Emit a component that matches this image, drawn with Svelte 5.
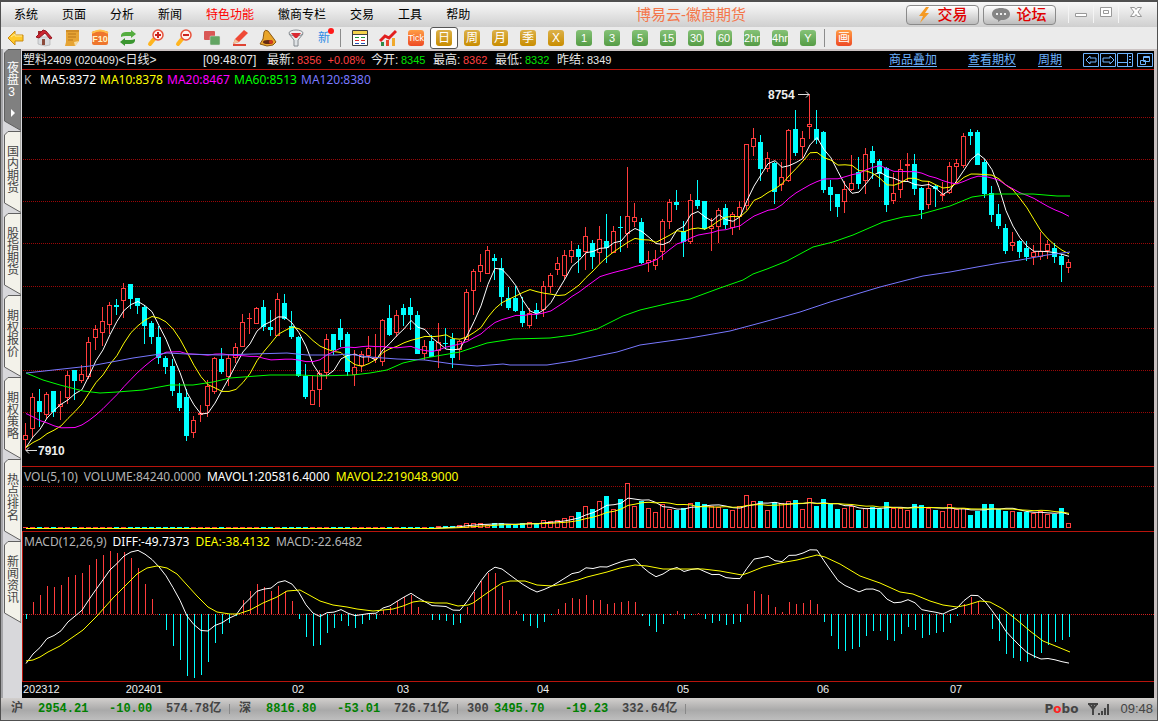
<script lang="ts">
	type Candle = { up: boolean; high: number; top: number; bottom: number; low: number };

	const STEP = 7;
	const FIRST_X = 25;
	const PRICE_TOP = 88;
	const VOL_TOP = 483;
	const VOL_BASE = 528;
	const MACD_TOP = 547;
	const ZERO = 614;

	const menus = ['系统', '页面', '分析', '新闻', '特色功能', '徽商专栏', '交易', '工具', '帮助'];
	const tabs = ['夜盘3', '国内期货', '股指期货', '期权报价', '期权策略', '热点排名', '新闻资讯'];
	const periods = [
		['日', 'gold'], ['周', 'gold'], ['月', 'gold'], ['季', 'gold'], ['X', 'gold'],
		['1', 'green'], ['3', 'green'], ['5', 'green'], ['15', 'green'], ['30', 'green'],
		['60', 'green'], ['2hr', 'green'], ['4hr', 'green'], ['Y', 'green']
	];
	const tools = ['back', 'home', 'note', 'f10', 'refresh', 'zoomin', 'zoomout', 'layers', 'pen', 'bell', 'filter', 'new'];
	const quotes = [
		['今开', '8345', 'down'],
		['最高', '8362', 'up'],
		['最低', '8332', 'down'],
		['昨结', '8349', '']
	];
	const indices = [
		['沪', '2954.21', '-10.00', '574.78亿'],
		['深', '8816.80', '-53.01', '726.71亿'],
		['300', '3495.70', '-19.23', '332.64亿']
	];
	const months: [number, string][] = [
		[17, '202401'], [39, '02'], [54, '03'], [74, '04'], [94, '05'], [114, '06'], [133, '07']
	];

	// direction, high, body top, body bottom, low
	const candles: Candle[] = `
r 423 435 440 450,r 393 397 429 437,c 389 401 412 427,r 392 394 415 419,c 391 391 412 417,
r 391 404 407 420,r 371 375 398 404,c 370 370 381 400,r 365 374 381 383,r 337 342 377 379,
r 325 329 338 350,r 307 321 333 346,r 302 305 325 334,c 299 305 307 315,r 283 288 301 318,
c 284 284 299 309,c 298 298 306 314,c 305 307 326 344,c 321 323 337 344,c 326 337 358 364,
c 356 358 367 374,c 359 366 391 396,c 383 393 408 411,c 389 397 436 441,r 416 420 433 438,
r 405 413 415 422,r 380 386 406 417,r 357 358 392 394,c 348 359 372 374,r 355 358 377 386,
r 343 347 358 363,r 314 322 347 347,r 313 318 319 334,r 307 308 324 324,c 300 307 327 331,
c 310 327 330 336,r 293 299 336 336,c 294 303 319 320,c 311 326 337 339,c 336 337 376 377,
c 364 376 397 399,r 376 390 405 405,r 370 373 390 407,r 334 339 373 379,c 334 334 350 355,
c 319 328 340 347,c 332 334 372 376,r 350 367 375 386,r 351 354 366 372,r 336 348 356 362,
r 334 357 359 363,r 319 320 362 366,c 305 318 335 336,r 310 315 333 337,c 304 308 315 326,
c 298 307 315 330,c 311 315 354 354,r 340 346 354 360,c 335 341 357 357,r 323 342 351 368,
c 328 343 344 349,c 333 339 358 368,r 340 341 350 360,r 289 292 340 340,r 269 271 291 315,
r 254 265 272 282,r 246 250 274 274,c 254 258 261 280,c 258 268 297 306,c 287 298 308 310,
c 286 298 311 312,c 297 311 323 327,r 308 313 326 328,c 303 310 313 319,r 281 286 310 317,
r 273 275 287 293,r 257 263 270 275,r 250 255 276 279,r 241 250 257 263,c 245 249 257 273,
r 227 236 252 270,c 240 243 257 269,r 226 239 253 264,c 214 241 248 263,r 226 231 253 253,
c 216 227 228 252,r 167 216 234 248,r 203 217 222 227,c 218 222 263 264,r 251 260 263 272,
r 250 259 266 270,r 219 221 252 260,r 199 202 222 229,c 190 202 205 210,c 221 231 242 257,
r 194 200 242 244,c 180 200 206 209,c 201 201 229 230,r 218 226 229 251,r 208 210 227 243,
c 204 208 225 229,r 212 214 228 235,r 201 207 217 230,r 144 144 206 210,r 128 138 147 156,
c 135 142 169 181,r 152 158 169 172,c 162 163 192 204,r 162 177 185 191,r 129 130 181 182,
c 110 129 153 156,r 131 138 147 158,r 94 124 127 139,c 110 129 140 144,c 131 132 190 193,
c 180 187 195 211,c 194 194 207 217,r 181 189 202 213,r 155 183 190 191,c 157 172 184 189,
r 148 154 181 194,c 146 151 163 179,c 159 161 174 187,c 167 168 205 212,r 173 193 201 204,
r 160 169 190 198,r 153 164 166 182,c 154 164 189 195,c 187 188 210 219,r 181 188 205 209,
c 185 186 189 207,r 182 194 196 201,r 162 166 193 194,r 159 163 167 183,r 133 136 166 168,
c 129 132 136 145,c 130 132 165 165,c 159 162 194 198,c 186 193 215 222,c 204 214 226 229,
c 224 228 251 254,r 232 242 246 251,c 240 241 252 258,c 241 248 257 261,r 245 252 257 265,
r 232 251 257 260,r 240 244 251 259,c 243 248 257 263,c 254 256 265 282,r 259 262 268 273`
		.split(',')
		.map((row) => {
			const [dir, ...v] = row.trim().split(' ');
			const [high, top, bottom, low] = v.map(Number);
			return { up: dir === 'r', high, top, bottom, low };
		});

	// Volume is negligible before the contract becomes active.
	const volume = [
		...Array(59).fill(VOL_BASE),
		526, 526, 526, 525, 523, 523, 523, 525, 523, 523, 524, 524, 523, 522, 523, 520, 521, 520, 518,
		516, 512, 506, 509, 501, 496, 509, 499, 483, 506, 501, 508, 512, 504, 509, 510, 508, 503, 502,
		504, 506, 507, 509, 510, 506, 495, 501, 501, 510, 502, 503, 501, 500, 509, 498, 506, 499, 504,
		509, 508, 506, 510, 508, 507, 509, 502, 508, 508, 510, 504, 505, 508, 510, 511, 504, 509, 508,
		515, 511, 504, 504, 509, 511, 511, 512, 512, 513, 511, 514, 514, 508, 523
	];

	const macd = [
		619, 602, 595, 586, 587, 585, 577, 575, 573, 565, 559, 555, 551, 553, 552, 558, 568, 584, 599,
		615, 630, 646, 660, 676, 678, 675, 662, 643, 634, 623, 616, 600, 591, 584, 587, 591, 586, 591,
		601, 619, 637, 646, 645, 633, 628, 621, 626, 628, 624, 620, 619, 610, 607, 601, 597, 595, 607,
		614, 620, 620, 621, 625, 623, 607, 592, 581, 573, 573, 586, 600, 611, 621, 626, 628, 622, 615,
		609, 603, 598, 599, 595, 600, 600, 604, 603, 602, 601, 602, 616, 626, 632, 624, 615, 611, 619,
		615, 613, 619, 623, 621, 625, 624, 622, 604, 591, 594, 595, 607, 612, 602, 604, 603, 600, 604,
		622, 636, 649, 651, 649, 647, 636, 631, 631, 640, 641, 634, 627, 630, 638, 635, 633, 632, 623,
		616, 604, 597, 602, 614, 629, 641, 654, 658, 661, 662, 658, 653, 645, 642, 640, 637
	];

	const dea: [number, number][] = [
		[26, 661], [33, 660], [40, 657], [48, 652], [60, 646], [83, 630], [97, 616], [113, 598],
		[127, 584], [137, 574], [147, 568], [157, 566], [167, 568], [177, 574], [187, 585], [197, 596],
		[208, 607], [217, 612], [230, 614], [238, 614], [250, 610], [263, 603], [277, 597], [287, 591],
		[300, 590], [320, 601], [333, 605], [347, 607], [357, 609], [373, 611], [393, 609], [403, 606],
		[413, 602], [420, 601], [435, 603], [447, 603], [458, 606], [468, 605], [473, 603], [487, 593],
		[502, 583], [510, 581], [525, 581], [537, 585], [552, 586], [563, 584], [578, 580], [587, 577],
		[607, 572], [620, 568], [635, 565], [647, 566], [663, 569], [703, 569], [720, 571], [742, 575],
		[748, 573], [763, 567], [780, 563], [797, 560], [817, 555], [825, 557], [840, 564], [860, 576],
		[880, 583], [900, 592], [913, 594], [930, 601], [943, 605], [957, 607], [967, 605], [980, 601],
		[990, 602], [1003, 609], [1017, 620], [1030, 631], [1043, 641], [1053, 645], [1070, 652]
	];

	const ma60 =
		'26,373 43,380 60,385 83,391 100,393 117,392 143,390 170,385 193,385 213,382 230,378 270,375 300,375 320,376 353,375 370,373 387,370 403,363 425,358 460,352 487,343 513,339 550,338 573,335 597,329 623,316 640,310 670,303 690,299 720,288 743,280 753,274 767,269 787,261 813,247 833,242 853,235 883,222 903,217 918,215 950,206 972,197 993,194 1033,194 1057,196 1070,196';
	const ma120 =
		'26,373 90,366 133,358 167,353 187,354 220,355 287,353 307,355 337,355 347,354 370,357 397,359 425,360 453,364 477,366 503,364 510,365 547,365 573,361 597,356 617,352 640,345 690,338 730,331 760,323 800,312 830,302 850,296 880,287 907,280 923,276 950,272 977,267 1000,263 1020,260 1047,255 1070,252';

	const x = (i: number) => FIRST_X + i * STEP;

	// closes before the first visible bar, so that the averages start at the left edge
	const earlier = [330, 338, 346, 355, 365, 376, 385, 425, 432, 438, 447, 447, 447, 447, 447, 450, 450, 450, 450];
	const closes = [...earlier, ...candles.map((c) => (c.up ? c.top : c.bottom))];

	function average(values: number[], n: number, lead: number) {
		const out: string[] = [];
		for (let i = lead; i < values.length; i++) {
			const part = values.slice(Math.max(0, i - n + 1), i + 1);
			const mean = part.reduce((a, b) => a + b, 0) / part.length;
			out.push(`${x(i - lead) + 1},${(mean + 0.5).toFixed(1)}`);
		}
		return out.join(' ');
	}

	function deaAt(px: number) {
		const k = Math.max(1, dea.findIndex((p) => p[0] >= px));
		const [x0, y0] = dea[k - 1];
		const [x1, y1] = dea[k];
		return y0 + ((y1 - y0) * (px - x0)) / (x1 - x0);
	}

	const diff = macd.map((v, i) => `${x(i) + 1},${(deaAt(x(i) + 1) + (v - ZERO) / 2).toFixed(1)}`).join(' ');

	let activePeriod = $state('日');
	let activeTab = $state('夜盘3');
</script>

<div class="window">
	<header class="titlebar">
		<nav class="menus">
			{#each menus as m}
				<button class="menu" class:hot={m === '特色功能'}>{m}</button>
			{/each}
		</nav>
		<h1>博易云-徽商期货</h1>
		<div class="actions">
			<button class="pill">
				<svg width="14" height="16" viewBox="0 0 14 16"><path d="M9 0 2 9h4l-3 7 9-10H8l4-6z" fill="#f59a23" /></svg>
				交易
			</button>
			<button class="pill">
				<svg width="18" height="14" viewBox="0 0 18 14">
					<path d="M9 0c5 0 9 2 9 6s-4 6-8 6l-1 0-3 2v-2C3 11 0 9 0 6c0-4 4-6 9-6z" fill="#858585" />
					<path d="M4 5h2v2H4zm4 0h2v2H8zm4 0h2v2h-2z" fill="#eee" />
				</svg>
				论坛
			</button>
			<div class="controls">
				<button aria-label="最小化"><svg width="14" height="14"><path d="M1.5 8.5h11v3h-11z" fill="#fff" stroke="#999" /></svg></button>
				<button aria-label="最大化"><svg width="14" height="14"><path d="M1.5 2.5h11v9h-11zM4.5 5.5h5v3h-5z" fill="#fff" stroke="#999" /></svg></button>
				<button aria-label="关闭"><svg width="14" height="14"><path d="M1.5 2.5h4l1.5 2 1.5-2h4L9 7l3.5 4.5h-4L7 9.5l-1.5 2h-4L5 7z" fill="#fff" stroke="#999" /></svg></button>
			</div>
		</div>
	</header>

	<div class="toolbar">
		{#each tools as t}
			<button class="tool" aria-label={t}>
				{#if t === 'new'}
					<span class="fresh">新</span>
				{:else}
					<svg width="18" height="18" viewBox="0 0 18 18">
						{#if t === 'back'}
							<path d="M1 9 8 2v4h8v6H8v4z" fill="#ffc928" stroke="#c98a12" />
							<path d="M4 8 8 5v2h7" fill="none" stroke="#ffeb9a" />
						{:else if t === 'home'}
							<path d="M3 8h12v8l-5 1-7-2z" fill="#d9dcdf" stroke="#9b9b9b" stroke-width=".5" />
							<path d="M3 2h3v4H3z" fill="#a52a2a" />
							<path d="M1 8 8 1l3 1 6 7-2 1-5-6-6 5z" fill="#cc2430" stroke="#931720" stroke-width="1" />
							<path d="M7 10h3v6H7z" fill="#8b4b3b" />
						{:else if t === 'note'}
							<path d="M3 1h13v11l-4 5H2l1-4z" fill="#e6a434" />
							<path d="m16 12-4 5-1-4z" fill="#f8dda0" />
							<path d="M3 2h13M5 5h8M5 8h8M5 11h5" stroke="#b9761a" />
						{:else if t === 'f10'}
							<rect x="1" y="2" width="16" height="14" rx="2" fill="#ef762d" />
							<path d="M1 4q8-5 16 0" fill="none" stroke="#ffc04a" stroke-width="2" />
							<text x="9" y="13" text-anchor="middle" font-size="9" font-weight="bold" fill="#fff3c8">F10</text>
						{:else if t === 'refresh'}
							<path d="M2 8V6q1-3 5-3h5V1l5 4-5 4V7H7q-3 0-5 1z" fill="#54ad3f" />
							<path d="M16 10v2q-1 3-5 3H6v2l-5-4 5-4v2h5q3 0 5-1z" fill="#3b9630" />
						{:else if t === 'zoomin' || t === 'zoomout'}
							<path d="m7 10-4 5" stroke="#ffb51f" stroke-width="4" stroke-linecap="round" />
							<circle cx="11" cy="6" r="5" fill="#fff2ed" stroke="#e8523c" stroke-width="1.5" />
							<path d={t === 'zoomin' ? 'M8 6h6M11 3v6' : 'M8 6h6'} stroke="#ca2420" stroke-width="2" />
						{:else if t === 'layers'}
							<rect x="1" y="2" width="11" height="9" rx="1" fill="#d95755" />
							<rect x="7" y="7" width="10" height="9" rx="1" fill="#63a563" stroke="#ddd" stroke-width=".5" />
						{:else if t === 'pen'}
							<path d="m2 15 2-5 9-9 4 3-9 9z" fill="#ef4936" />
							<path d="m2 15 2-5 4 3z" fill="#efc49b" />
							<path d="M2 16h13" stroke="#df4433" stroke-width="2" />
						{:else if t === 'bell'}
							<path d="M5 3q1-3 4-1l6 8 2 3-3 3-6 1-7-2q4-4 4-12z" fill="#e9a52a" stroke="#8c5812" />
							<ellipse cx="9" cy="13" rx="5" ry="2" fill="#642a13" />
							<circle cx="12" cy="13" r="2" fill="#d23a20" />
						{:else}
							<ellipse cx="9" cy="4" rx="7" ry="3" fill="#eee" stroke="#8a8f94" />
							<path d="M4 4h10l-4 5H8z" fill="#da2931" />
							<path d="m2 5 5 6v6h4v-6l5-6" fill="none" stroke="#81888e" />
							<path d="M8 11h2v5H8z" fill="#dfe3e6" />
						{/if}
					</svg>
				{/if}
			</button>
		{/each}
		<i class="sep"></i>
		<button class="tool" aria-label="报价表">
			<svg width="18" height="18" viewBox="0 0 18 18">
				<path d="M1.5 1.5h15v15h-15z" fill="#fff" stroke="#3a3a3a" />
				<path d="M2 2h14v3H2z" fill="#f2d24c" />
				<path d="M2 5.5h14" stroke="#444" />
				<path d="M4 8.5h4M10 8.5h4" stroke="#1f9a3c" />
				<path d="M4 11.5h4M10 11.5h4" stroke="#e02a2a" />
				<path d="M4 14.5h4M10 14.5h4" stroke="#2451b8" />
			</svg>
		</button>
		<button class="tool" aria-label="走势图">
			<svg width="18" height="18" viewBox="0 0 18 18">
				<path d="M2 13h3v4H2z" fill="#2e8a46" /><path d="M7 11h3v6H7z" fill="#e8452c" /><path d="M13 9h3v8h-3z" fill="#f0a92c" />
				<path d="m1 12 5-5 4 2 7-7" fill="none" stroke="#e21f1f" stroke-width="3" />
			</svg>
		</button>
		<button class="tool"><span class="tile orange tick">Tick</span></button>
		{#each periods as [label, tone]}
			<button class="tool" class:active={label === activePeriod} onclick={() => (activePeriod = label)}>
				<span class="tile {tone}">{label}</span>
			</button>
		{/each}
		<i class="sep"></i>
		<button class="tool"><span class="tile orange">画</span></button>
	</div>

	<div class="body">
		<aside class="tabs">
			{#each tabs as t}
				<button class="tab" class:on={t === activeTab} onclick={() => (activeTab = t)}>
					<svg width="17" height="82" viewBox="0 0 17 82">
						<path class="face" d="M17 .5H4L.5 4v68L17 81.5z" />
						{#if t === activeTab}<path d="m7 60 4 4-4 4z" fill="#fff" />{/if}
					</svg>
					<span>{t}</span>
				</button>
			{/each}
		</aside>

		<main class="panel">
			<div class="quote">
				<span class="name">塑料<small>2409 (020409)</small>&lt;日线&gt;</span>
				<span class="time">[09:48:07]</span>
				<span class="cell wide"><span class="lbl">最新:</span><b class="up">8356</b><b class="up">+0.08%</b></span>
				{#each quotes as [label, value, tone]}
					<span class="cell"><span class="lbl">{label}:</span><b class={tone}>{value}</b></span>
				{/each}
				<div class="links">
					<a href="#overlay">商品叠加</a>
					<a class="mid" href="#options">查看期权</a>
					<a href="#period">周期</a>
				</div>
				<div class="nav">
					<button aria-label="后退"><svg width="16" height="15"><path d="M.5.5h15v13H.5zM3 7l4-4v2h6v4H7v2z" /></svg></button>
					<button aria-label="前进"><svg width="16" height="15"><path d="M.5.5h15v13H.5zM14 7l-4-4v2H3v4h7v2z" /></svg></button>
					<button aria-label="侧栏"><svg width="16" height="15"><path d="M.5.5h15v13H.5zM10.5 0v14M0 9.5h10M12 3.5h2M12 6.5h2M12 9.5h2" /></svg></button>
					<button class="last" aria-label="窗口"><svg width="16" height="15"><path d="M.5.5h15v13H.5zM6.5 3.5h6v5h-6zM6 4.5h6M3.5 7.5h5v4h-5z" /></svg></button>
				</div>
			</div>

			<section class="pane">
				<div class="legend mas">
					<span class="grey">K</span><span>MA5:8372</span><span class="yellow">MA10:8378</span>
					<span class="magenta">MA20:8467</span><span class="lime">MA60:8513</span><span class="violet">MA120:8380</span>
				</div>
				<svg class="plot" height="378">
					<g transform="translate(-22 {-PRICE_TOP})">
						{#each [117, 159, 201, 243, 286, 328, 370, 412] as y}
							<line class="grid" x1="23" x2="120%" y1={y + 0.5} y2={y + 0.5} />
						{/each}
						{#each candles as c, i}
							<g class={c.up ? 'rise' : 'fall'}>
								<path d="M{x(i) + 0.5} {c.high}V{c.top}M{x(i) + 0.5} {c.bottom}V{c.low}" />
								{#if c.up && c.bottom - c.top > 2}
									<rect x={x(i) - 1.5} y={c.top + 0.5} width="4" height={c.bottom - c.top - 1} />
								{:else}
									<rect class="solid" x={x(i) - 2} y={c.top} width="5" height={c.bottom - c.top} />
								{/if}
							</g>
						{/each}
						<polyline class="line white" points={average(closes, 5, 19)} />
						<polyline class="line s-yellow" points={average(closes, 10, 19)} />
						<polyline class="line s-magenta" points={average(closes, 20, 19)} />
						<polyline class="line s-lime" points={ma60} />
						<polyline class="line s-violet" points={ma120} />
						<text class="mark" x="768" y="99">8754</text>
						<path class="arrow" d="M798 94.5h11m-3-3 3 3-3 3" />
						<text class="mark" x="38" y="455">7910</text>
						<path class="arrow" d="M37 450.5H26m3-3-3 3 3 3" />
					</g>
				</svg>
			</section>

			<section class="pane">
				<div class="legend low">
					<span class="grey">VOL(5,10)</span><span class="grey">VOLUME:84240.0000</span>
					<span>MAVOL1:205816.4000</span><span class="yellow">MAVOL2:219048.9000</span>
				</div>
				<svg class="plot" height="48">
					<g transform="translate(-22 {-VOL_TOP})">
						<line class="grid" x1="23" x2="120%" y1="486.5" y2="486.5" />
						{#each volume as v, i}
							<g class={candles[i].up ? 'rise' : 'fall'}>
								{#if candles[i].up && VOL_BASE - v > 2}
									<rect x={x(i) - 1.5} y={v + 0.5} width="4" height={VOL_BASE - v - 1} />
								{:else}
									<rect class="solid" x={x(i) - 2} y={Math.min(v, VOL_BASE - 1)} width="5" height={Math.max(1, VOL_BASE - v)} />
								{/if}
							</g>
						{/each}
						<polyline class="line white" points={average(volume, 5, 0)} />
						<polyline class="line s-yellow" points={average(volume, 10, 0)} />
					</g>
				</svg>
			</section>

			<section class="pane macd">
				<div class="legend lowest">
					<span class="grey">MACD(12,26,9)</span><span>DIFF:-49.7373</span>
					<span class="yellow">DEA:-38.4132</span><span class="grey">MACD:-22.6482</span>
				</div>
				<svg class="plot" height="134">
					<g transform="translate(-22 {-MACD_TOP})">
						<line class="grid bright" x1="23" x2="120%" y1="614.5" y2="614.5" />
						{#each macd as v, i}
							<path class={v < ZERO ? 'rise' : 'fall'} d="M{x(i) + 1.5} {ZERO}V{v}" />
						{/each}
						<polyline class="line white" points={diff} />
						<polyline class="line s-yellow" points={dea.map((p) => p.join()).join(' ')} />
					</g>
				</svg>
			</section>

			<svg class="axis" height="15">
				<text x="1" y="11">202312</text>
				{#each months as [i, label]}
					<text x={x(i) - 22} y="11" text-anchor="middle">{label}</text>
				{/each}
			</svg>
		</main>
	</div>

	<footer class="status">
		{#each indices as [name, value, change, amount]}
			<div class="index">
				<span>{name}</span><span class="green">{value}</span><span class="green">{change}</span><span>{amount}</span><i></i>
			</div>
		{/each}
		<div class="right">
			<strong>P<em>o</em>bo</strong>
			<svg width="22" height="13" viewBox="0 0 22 13">
				<path d="M0 1h10M1 1l4 5 4-5M5 1v11" fill="none" stroke="#444" stroke-width="2" />
				<path d="M10 10h2v2h-2zM13 8h2v4h-2zM16 5h2v7h-2zM19 1h2v11h-2z" fill="#444" />
			</svg>
			<time>09:48</time>
		</div>
	</footer>
</div>

<style>
	:global(body) {
		margin: 0;
		background: #cfcfd1;
	}

	.window {
		display: flex;
		flex-direction: column;
		min-height: 100vh;
		box-sizing: border-box;
		border: 1px solid #505050;
		border-top-width: 2px;
		overflow: hidden;
		background: #c9c9cb;
		font: 12px/14px 'Liberation Sans', 'Noto Sans CJK SC', sans-serif;
		color: #000;
	}

	button {
		margin: 0;
		padding: 0;
		border: 0;
		background: none;
		font: inherit;
		color: inherit;
	}
	svg {
		display: block;
		flex: none;
	}

	.titlebar {
		display: flex;
		align-items: center;
		height: 25px;
		padding-left: 13px;
		background: linear-gradient(#f8f8f8, #e4e4e4 50%, #cfcfcf);
	}
	h1 {
		margin: 0 auto;
		padding-left: 6px;
		font-size: 15px;
		font-weight: 400;
		line-height: 20px;
		color: #f4764a;
		white-space: nowrap;
	}
	.menus {
		display: flex;
		gap: 24px;
		white-space: nowrap;
	}
	.hot {
		color: #f00;
	}
	.actions {
		display: flex;
		gap: 4px;
	}
	.pill {
		display: flex;
		align-items: center;
		justify-content: center;
		gap: 6px;
		width: 73px;
		height: 20px;
		border: 1px solid #8a8a8a;
		border-radius: 4px;
		background: linear-gradient(#fff, #dedede 50%, #bdbdbd);
		color: #e00000;
		font-size: 15px;
		font-weight: 500;
		line-height: 16px;
		white-space: nowrap;
	}
	.controls {
		display: flex;
		width: 97px;
		padding-left: 8px;
		box-sizing: border-box;
	}
	.controls button {
		display: grid;
		justify-items: center;
		align-items: start;
		width: 25px;
		height: 18px;
		border-left: 1px solid #f4f4f4;
	}
	.controls button:last-child {
		width: 36px;
	}

	.toolbar {
		display: flex;
		align-items: center;
		height: 22px;
		padding-left: 1px;
		border-bottom: 2px solid #cbc3c3;
		background: #ebebeb;
	}
	.tool {
		display: grid;
		place-items: center;
		width: 28px;
		height: 22px;
		flex: none;
		box-sizing: border-box;
	}
	.tool.active {
		border: 1px solid #555;
		border-radius: 3px;
		background: #fff;
	}
	.sep {
		width: 1px;
		height: 18px;
		margin: 0 5px 0 2px;
		background: #8c8c8c;
	}
	.tile {
		display: flex;
		justify-content: center;
		width: 16px;
		height: 16px;
		border-radius: 3px;
		color: #fff;
		font-size: 12px;
		line-height: 16px;
		white-space: nowrap;
	}
	.gold {
		background: linear-gradient(#dcb14a, #c98d00);
	}
	.green.tile {
		background: linear-gradient(#85c277, #559c45);
		font-size: 11px;
	}
	.orange {
		background: linear-gradient(#ff9d45, #ee4a24);
	}
	.tick {
		font-size: 9px;
	}
	.fresh {
		position: relative;
		color: #2f8be6;
		font-size: 12px;
	}
	.fresh::after {
		content: '';
		position: absolute;
		top: -3px;
		right: -4px;
		width: 6px;
		height: 6px;
		border-radius: 50%;
		background: #ff1a1a;
	}

	.body {
		display: flex;
		flex: 1;
	}
	.tabs {
		width: 18px;
		padding-left: 3px;
		flex: none;
		display: flex;
		flex-direction: column;
		background: linear-gradient(90deg, #a5a5a8 2px, #d8d8db 2px);
		margin-top: -2px;
	}
	.tab {
		display: grid;
		place-items: center;
		width: 17px;
		height: 82px;
		color: #444;
	}
	.tab > * {
		grid-area: 1 / 1;
	}
	.tab span {
		writing-mode: vertical-rl;
		text-orientation: upright;
		font-size: 12px;
		line-height: 12px;
		padding: 0 2px 6px 0;
	}
	.face {
		fill: #f3f2ea;
		stroke: #606060;
	}
	.on .face {
		fill: #808080;
	}
	.tab.on {
		color: #fff;
	}
	.tab.on span {
		padding-bottom: 20px;
	}

	.panel {
		flex: 1;
		min-width: 0;
		background: #000;
		color: #fff;
		border-right: 3px solid #cbc3c3;
	}
	.quote {
		display: flex;
		align-items: center;
		height: 18px;
		padding: 0 1px;
		border-bottom: 1px solid #b8140c;
		font-size: 12px;
		line-height: 18px;
		color: #e8e8e8;
		white-space: nowrap;
	}
	.name {
		width: 180px;
	}
	small {
		font-size: 11px;
	}
	.time {
		width: 64px;
	}
	.cell {
		display: flex;
		width: 62px;
	}
	.wide {
		width: 104px;
	}
	.lbl {
		width: 30px;
	}
	.cell b {
		font-weight: 400;
		font-size: 11px;
	}
	.cell b + b {
		padding-left: 6px;
	}
	.up {
		color: #ff4040;
	}
	.down {
		color: #00e600;
	}
	.links {
		display: flex;
		margin-left: auto;
		color: #6eb4ff;
	}
	.links a {
		color: inherit;
		text-underline-offset: 2px;
	}
	.mid {
		margin: 0 22px 0 31px;
	}
	.nav {
		display: flex;
		gap: 1px;
		padding-left: 21px;
	}
	.nav path {
		fill: none;
		stroke: #6eb4ff;
	}
	.last {
		margin-left: 3px;
	}

	.pane {
		border-bottom: 1px solid #b8140c;
	}
	.macd {
		box-shadow: inset 1px 0 #b8140c;
	}
	.legend {
		display: flex;
		gap: 6px;
		padding-left: 2px;
		height: 18px;
		font: 12px/20px 'Noto Sans', 'DejaVu Sans Condensed', sans-serif;
		white-space: nowrap;
	}
	.low {
		height: 16px;
	}
	.lowest {
		height: 15px;
	}
	.mas {
		display: grid;
		grid-template-columns: 16px 60px 67px 67px 67px auto;
		gap: 0;
	}
	.grey {
		color: #b4b4b4;
	}
	.yellow {
		color: #ff0;
	}
	.magenta {
		color: #f0f;
	}
	.lime {
		color: #0f0;
	}
	.violet {
		color: #7878ff;
	}

	.plot {
		width: 100%;
	}
	.grid {
		stroke: #9a0808;
		stroke-dasharray: 1 1;
		shape-rendering: crispEdges;
	}
	.bright {
		stroke: #d02020;
	}
	.rise {
		stroke: #ff3c3c;
		fill: #000;
		shape-rendering: crispEdges;
	}
	.fall {
		stroke: #0ff;
		fill: #0ff;
		shape-rendering: crispEdges;
	}
	.solid {
		stroke: none;
	}
	.rise .solid {
		fill: #ff3c3c;
	}
	.line {
		fill: none;
		stroke-linejoin: round;
	}
	.white {
		stroke: #fff;
	}
	.s-yellow {
		stroke: #ff0;
	}
	.s-magenta {
		stroke: #f0f;
	}
	.s-lime {
		stroke: #0f0;
	}
	.s-violet {
		stroke: #7878ff;
	}
	.mark {
		fill: #eee;
		font: bold 12px 'Liberation Sans', sans-serif;
	}
	.arrow {
		fill: none;
		stroke: #ddd;
	}
	.axis {
		width: 100%;
		fill: #eee;
		font-size: 11px;
	}

	.status {
		display: flex;
		align-items: center;
		height: 22px;
		padding: 0 4px 0 10px;
		background: linear-gradient(#d2cfcd, #a9a9a9 55%, #bebebe);
		color: #444;
		white-space: nowrap;
	}
	.index {
		display: grid;
		grid-template-columns: 27px 71px 57px 63px 10px;
		align-items: center;
		font: bold 12px/16px 'Liberation Mono', 'Noto Sans CJK SC', monospace;
	}
	.index i {
		width: 1px;
		height: 10px;
		background: #888;
	}
	.index .green {
		color: #008000;
	}
	.right {
		display: flex;
		align-items: center;
		gap: 10px;
		margin-left: auto;
		font-size: 13px;
	}
	strong {
		font-family: 'DejaVu Sans', sans-serif;
		font-size: 12px;
	}
	em {
		font-style: normal;
		color: #f22;
	}
</style>
